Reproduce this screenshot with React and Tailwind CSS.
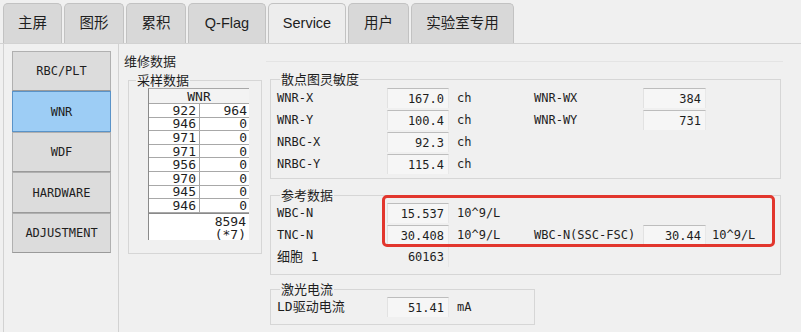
import React from "react";

const mono = "font-['DejaVu_Sans_Mono','Noto_Sans_CJK_SC',monospace]";
const cjk = "font-['Noto_Sans_CJK_SC','Noto_Sans',sans-serif]";

const tabs = [
  { t: "主屏", w: "w-[59px]" },
  { t: "图形", w: "w-[60px]" },
  { t: "累积", w: "w-[60px]" },
  { t: "Q-Flag", w: "w-[78px]" },
  { t: "Service", w: "w-[78px]", active: true },
  { t: "用户", w: "w-[61px]" },
  { t: "实验室专用", w: "w-[103px]" },
];

const buttons = [
  { t: "RBC/PLT", h: "h-[40px]" },
  { t: "WNR", h: "h-[41px]", active: true },
  { t: "WDF", h: "h-[40px]" },
  { t: "HARDWARE", h: "h-[41px]" },
  { t: "ADJUSTMENT", h: "h-[40px]" },
];

const rows = [
  ["922", "964"],
  ["946", "0"],
  ["971", "0"],
  ["971", "0"],
  ["956", "0"],
  ["970", "0"],
  ["945", "0"],
  ["946", "0"],
];

function Box({ value, w = "w-[62px]", bare }) {
  return (
    <div
      className={`${w} h-full flex items-center justify-end pr-[4px] ${
        bare
          ? "border-r border-[#e6e6e6]"
          : "bg-[#f6f6f6] border-t border-t-[#bdbdbd] border-l border-l-[#e2e2e2] border-r border-r-[#e8e8e8]"
      }`}
    >
      {value}
    </div>
  );
}

function Field({ label, value, unit, label2, value2, unit2, bare }) {
  return (
    <div className={`flex h-[20px] items-center text-[12px] text-[#1e1e1e] ${mono}`}>
      <span className="w-[110px] -mt-[1px]">{label}</span>
      <Box value={value} bare={bare} />
      <span className="w-[85px] pl-[8px] -mt-[1px]">{unit}</span>
      {label2 && (
        <>
          <span className="w-[109px] -mt-[1px]">{label2}</span>
          <Box value={value2} w="w-[63px]" />
          <span className="pl-[6px] -mt-[1px]">{unit2}</span>
        </>
      )}
    </div>
  );
}

function Group({ title, className, children, legendCls = "ml-[3px]" }) {
  return (
    <fieldset className={`border border-[#d6d6d6] ${className}`}>
      <legend className={`${legendCls} px-[1px] text-[13px] leading-[16px] text-[#1e1e1e] ${cjk}`}>
        {title}
      </legend>
      {children}
    </fieldset>
  );
}

export default function App() {
  return (
    <div className="relative w-[801px] h-[332px] overflow-hidden bg-[#f0f0f0] text-[#1e1e1e]">
      {/* Tab bar */}
      <div className="h-[44px] flex items-end gap-[2px] pl-[3px] border-b border-[#d2d2d2]">
        {tabs.map((tab) => (
          <div
            key={tab.t}
            className={`${tab.w} h-[40px] rounded-t-[5px] border border-b-0 border-[#c2c2c2] flex items-center justify-center text-[14.5px] font-['Liberation_Sans','Noto_Sans_CJK_SC',sans-serif] ${
              tab.active ? "bg-[#ededed]" : "bg-[#d8d8d8]"
            }`}
          >
            {tab.t}
          </div>
        ))}
      </div>

      <div className="flex h-[288px]">
        {/* Left panel */}
        <div className="ml-[3px] w-[116px] border-l border-r border-[#d2d2d2] pt-[7px] pl-[8px] flex flex-col">
          {buttons.map((b) => (
            <div
              key={b.t}
              className={`${b.h} w-[99px] flex items-center justify-center text-[12px] ${mono} border ${
                b.active
                  ? "bg-[#9dcdf5] border-[#5a93c8]"
                  : "bg-[#dcdcdc] border-[#b0b0b0] border-b-[#9a9a9a]"
              }`}
            >
              {b.t}
            </div>
          ))}
        </div>

        {/* Main */}
        <div className="flex-1 pl-[5px] pt-[9px]">
          <div className="flex items-center h-[16px]">
            <span className={`text-[13px] leading-[16px] ${cjk}`}>维修数据</span>
            <div className="flex-1 ml-[90px] mr-[18px] border-t border-[#e4e4e4]" />
          </div>

          <div className="flex mt-[2px]">
            {/* Sampling data */}
            <Group
              title="采样数据"
              className="ml-[4px] mt-[1px] w-[134px] h-[182px] pl-[19px]"
              legendCls="-ml-[12px]"
            >
              <div className={`w-[101px] bg-white border-l border-[#8a8a8a] border-t border-t-[#a8a8a8] ${mono} text-[13px]`}>
                <div className="h-[15px] flex items-center justify-center bg-[#f3f3f3] border-b border-[#a8a8a8] leading-none">
                  WNR
                </div>
                {rows.map((r, i) => (
                  <div key={i} className="flex h-[13.6px] border-b border-[#a8a8a8] leading-none">
                    <div className="w-[51px] border-r border-[#a8a8a8] flex items-center justify-end pr-[3px]">
                      {r[0]}
                    </div>
                    <div className="flex-1 flex items-center justify-end pr-[2px]">{r[1]}</div>
                  </div>
                ))}
                <div className="border-t border-[#8a8a8a] text-right pr-[3px] leading-[13.5px] pt-[1px] h-[27px]">
                  <div>8594</div>
                  <div>(*7)</div>
                </div>
              </div>
            </Group>

            {/* Right column */}
            <div className="ml-[8px] flex flex-col">
              <Group title="散点图灵敏度" className="w-[511px] pl-[6px] pt-[1px] pb-[4px]">
                <div className="flex flex-col gap-[2px]">
                  <Field label="WNR-X" value="167.0" unit="ch" label2="WNR-WX" value2="384" unit2="" />
                  <Field label="WNR-Y" value="100.4" unit="ch" label2="WNR-WY" value2="731" unit2="" />
                  <Field label="NRBC-X" value="92.3" unit="ch" />
                  <Field label="NRBC-Y" value="115.4" unit="ch" />
                </div>
              </Group>

              <Group title="参考数据" className="mt-[8px] w-[511px] pl-[6px] pb-[7px]">
                <div className="flex flex-col gap-[2px]">
                  <Field label="WBC-N" value="15.537" unit="10^9/L" />
                  <Field
                    label="TNC-N"
                    value="30.408"
                    unit="10^9/L"
                    label2="WBC-N(SSC-FSC)"
                    value2="30.44"
                    unit2="10^9/L"
                  />
                  <Field label={<span className="text-[13px]">细胞 1</span>} value="60163" unit="" bare />
                </div>
              </Group>

              <Group title="激光电流" className="mt-[6px] w-[253px] pl-[6px] pb-[7px]">
                <Field label={<span className="text-[13px]">LD驱动电流</span>} value="51.41" unit="mA" />
              </Group>
            </div>
          </div>
        </div>
      </div>

      {/* Red highlight */}
      <div className="absolute left-[382px] top-[195px] w-[393px] h-[52px] border-[3px] border-[#e2362d] rounded-[5px] pointer-events-none" />
    </div>
  );
}
